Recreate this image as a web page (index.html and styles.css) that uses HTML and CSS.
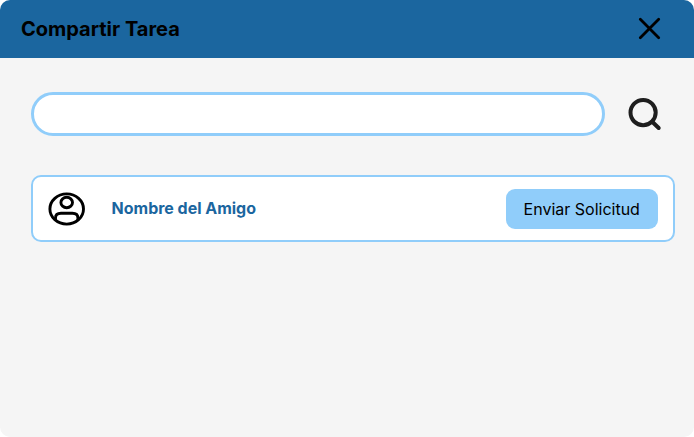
FILE: index.html
```html
<!DOCTYPE html>
<html lang="es">
<head>
<meta charset="utf-8">
<title>Compartir Tarea</title>
<link rel="stylesheet" href="styles.css">
</head>
<body>
<main class="dialog">
  <header class="dialog-header">
    <h1 class="title">Compartir Tarea</h1>
    <button class="icon-button" aria-label="Cerrar">
      <svg width="23" height="24" viewBox="0 0 23 24" fill="none" stroke="#000" stroke-width="2.8" stroke-linecap="round"><path d="M2.3 2.3 20.7 20.7M20.7 2.3 2.3 20.7"/></svg>
    </button>
  </header>
  <div class="dialog-body">
    <div class="search">
      <input class="search-field" type="text" aria-label="Buscar">
      <button class="icon-button" aria-label="Buscar">
        <svg width="34" height="34" viewBox="0 0 34 34" fill="none" stroke="#1e1e1e" stroke-width="4" stroke-linecap="round"><circle cx="15.1" cy="15.6" r="12.6"/><path d="M24.2 24.7 30.7 31"/></svg>
      </button>
    </div>
    <div class="friend">
      <svg class="avatar" width="38" height="34" viewBox="0 0 38 34" fill="none" stroke="#000" stroke-width="2.9"><ellipse cx="18.7" cy="17" rx="16.8" ry="15.1"/><ellipse cx="18.7" cy="10.5" rx="5.8" ry="5.2"/><path d="M7.5 28V26Q7.5 21.3 13 21.3H24.4Q29.9 21.3 29.9 26V28"/></svg>
      <span class="friend-name">Nombre del Amigo</span>
      <button class="send">Enviar Solicitud</button>
    </div>
  </div>
</main>
</body>
</html>
```
FILE: styles.css
```css
* {
  box-sizing: border-box;
}

body {
  margin: 0;
  background: #fff;
  font-family: Inter, sans-serif;
}

button {
  border: 0;
  padding: 0;
  font: inherit;
}

.dialog {
  height: 437px;
  border-radius: 10px;
  overflow: hidden;
  background: #f5f5f5;
}

.dialog-header {
  display: flex;
  align-items: center;
  justify-content: space-between;
  height: 58px;
  padding: 0 33px 0 21px;
  background: #1b669f;
}

.title {
  margin: 0;
  font-size: 20px;
  font-weight: 700;
  line-height: 24px;
  color: #000;
}

.icon-button {
  display: flex;
  background: none;
}

.dialog-body {
  padding: 34px 19px 0 31px;
}

.search {
  display: flex;
  align-items: center;
  gap: 23px;
  height: 44px;
}

.search-field {
  width: 574px;
  height: 44px;
  padding: 0 20px;
  border: 3px solid #90cdfa;
  border-radius: 22px;
  background: #fff;
  font: inherit;
}

.friend {
  display: flex;
  align-items: center;
  height: 67px;
  margin-top: 39px;
  padding: 0 15px;
  border: 2px solid #90cdfa;
  border-radius: 10px;
  background: #fff;
}

.friend-name {
  margin-left: 25.6px;
  padding-bottom: 2px;
  font-size: 16px;
  font-weight: 700;
  letter-spacing: -0.02px;
  color: #1b669f;
}

.send {
  width: 152.5px;
  height: 40px;
  margin-left: auto;
  border-radius: 9px;
  background: #90cdfa;
  color: #000;
  font-size: 16px;
}
```
